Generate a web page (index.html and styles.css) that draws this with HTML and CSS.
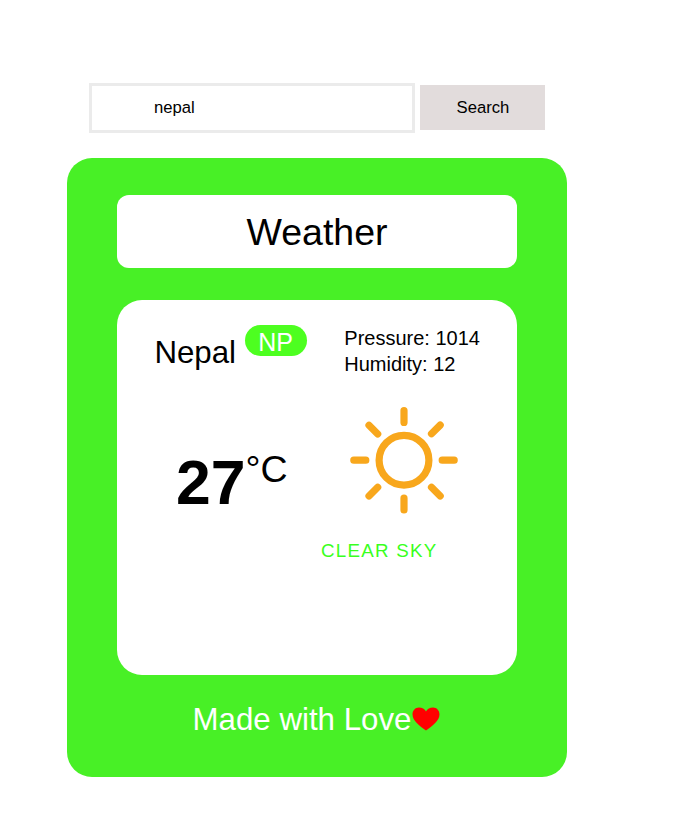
FILE: index.html
```html
<!DOCTYPE html>
<html lang="en">
<head>
<meta charset="utf-8">
<title>Weather</title>
<link rel="stylesheet" href="styles.css">
</head>
<body>
<form class="search">
  <input class="search-input" type="text" value="nepal">
  <button class="search-button" type="button">Search</button>
</form>
<main class="card">
  <h1 class="title">Weather</h1>
  <section class="panel">
    <div class="top">
      <div class="city">Nepal</div>
      <div class="country">NP</div>
      <div class="details">
        <div>Pressure: 1014</div>
        <div>Humidity: 12</div>
      </div>
    </div>
    <div class="middle">
      <div class="temp"><span class="degrees">27</span><span class="unit">°C</span></div>
      <svg class="sun" viewBox="0 0 110 110" fill="none" stroke="#f8a71c" stroke-width="7.2" stroke-linecap="round">
        <circle cx="55" cy="55.200" r="24.9"/>
        <path d="M55 5.600v11.800M55 93.200v11.800M4.800 55.200h12M93.200 55.200h12M20 20.300l8.700 8.700M91.200 20.100l-8.700 8.700M20 91l8.700-8.700M91.200 91l-8.700-8.700"/>
      </svg>
    </div>
    <div class="description">CLEAR SKY</div>
  </section>
  <footer class="footer">
    <span>Made with Love</span>
    <svg class="heart" viewBox="0 0 28 24" fill="#f00"><path d="M14 23.500C7.500 19 .5 13.800.5 7.300.5 3.200 3.400.4 6.900.4c3.200 0 5.800 1.400 7.100 4.200C15.300 1.800 17.900.4 21.100.4c3.500 0 6.400 2.800 6.400 6.900C27.500 13.800 20.500 19 14 23.500Z"/></svg>
  </footer>
</main>
</body>
</html>
```

FILE: styles.css
```css
* { box-sizing: border-box; }
body {
  margin: 0;
  padding: 83px 0 0 67px;
  background: #fff;
  color: #000;
  font-family: "Liberation Sans", Arial, sans-serif;
}
.search {
  display: flex;
  gap: 5px;
  height: 50px;
  margin: 0 0 25px 22px;
}
.search-input {
  width: 326px;
  height: 50px;
  padding: 0 62px;
  border: 3px solid #ebebeb;
  border-radius: 0;
  outline: 0;
  background: #fff;
  color: #000;
  font: 16.67px "Liberation Sans", Arial, sans-serif;
}
.search-button {
  width: 125px;
  height: 45px;
  margin-top: 2px;
  padding: 0 0 0 1px;
  border: 0;
  background: #e2dcdc;
  color: #000;
  font: 16.67px "Liberation Sans", Arial, sans-serif;
}
.card {
  width: 500px;
  height: 619px;
  padding: 37px 50px 0;
  border-radius: 25px;
  background: #48f026;
}
.title {
  height: 73px;
  margin: 0 0 32px;
  border-radius: 12px;
  background: #fff;
  font-size: 37.5px;
  font-weight: 400;
  line-height: 75px;
  text-align: center;
}
.panel {
  height: 375px;
  padding: 25px 37px 0;
  border-radius: 25px;
  background: #fff;
}
.top {
  display: flex;
  height: 75px;
}
.city {
  width: 91px;
  padding: 10px 0 0 0.4px;
  font-size: 31.25px;
  line-height: 36px;
}
.country {
  width: 62px;
  height: 31px;
  padding-right: 1px;
  border-radius: 16px;
  background: #4dff20;
  color: #fff;
  font-size: 25px;
  line-height: 34px;
  text-align: center;
}
.details {
  margin-left: 37.3px;
  font-size: 20px;
  line-height: 26px;
  white-space: nowrap;
}
.middle {
  display: flex;
  height: 139px;
}
.temp {
  display: flex;
  align-items: flex-start;
  width: 195px;
  padding: 46px 0 0 22px;
}
.degrees {
  font-size: 62.5px;
  font-weight: 700;
  line-height: 72px;
}
.unit {
  font-size: 37.5px;
  line-height: 46px;
}
.sun {
  width: 110px;
  height: 110px;
  margin-top: 5px;
}
.description {
  padding-left: 167px;
  color: #39ff20;
  font-size: 18.75px;
  line-height: 24px;
  letter-spacing: 1.25px;
}
.footer {
  display: flex;
  justify-content: center;
  padding: 27px 1.5px 0 0;
  color: #fff;
  font-size: 31.25px;
  line-height: 36px;
}
.heart {
  width: 28px;
  height: 24px;
  margin: 4.5px 0 0 0.5px;
}
```
